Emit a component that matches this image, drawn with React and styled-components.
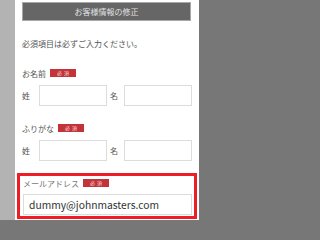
import React from "react";
import styled, { createGlobalStyle } from "styled-components";

const Global = createGlobalStyle`
  html, body { margin: 0; padding: 0; }
  body { font-family: "Noto Sans CJK JP", "Noto Sans", sans-serif; background: #777; }
  * { box-sizing: border-box; }
`;

const Page = styled.div`
  display: flex;
  width: 100%;
  height: 220px;
  overflow: hidden;
  background: #777;
`;

const LeftShade = styled.div`
  width: 15px;
  flex: none;
  background: #b3b3b3;
`;

const RightShade = styled.div`
  flex: 1;
  background: #777;
`;

const Panel = styled.div`
  width: 184px;
  flex: none;
  background: #fff;
  padding: 2px 8px 0 7px;
  display: flex;
  flex-direction: column;
`;

const Header = styled.div`
  height: 19px;
  background: #666;
  border: 1px solid #a8a8a8;
  color: #e2e2e2;
  font-size: 8px;
  display: flex;
  align-items: center;
  justify-content: center;
`;

const Intro = styled.div`
  margin-top: 17px;
  font-size: 8px;
  line-height: 12px;
  color: #555;
`;

const LabelLine = styled.div`
  margin-top: ${(p) => p.$top}px;
  display: flex;
  align-items: center;
  height: 12px;
  font-size: 8px;
  color: ${(p) => p.$color || "#555"};
`;

const Badge = styled.span`
  margin-left: 4px;
  width: 26px;
  height: 8px;
  background: #c3343a;
  color: #f4d6d7;
  font-size: 5px;
  line-height: 8px;
  display: inline-flex;
  align-items: center;
  justify-content: center;
  letter-spacing: 2px;
  padding-left: 2px;
`;

const Row = styled.div`
  margin-top: ${(p) => p.$top ?? 6}px;
  display: flex;
  align-items: center;
  height: 21px;
`;

const SmallLabel = styled.span`
  width: ${(p) => p.$w}px;
  flex: none;
  font-size: 8px;
  color: #555;
  padding-left: ${(p) => p.$pl || 0}px;
`;

const Input = styled.div`
  width: ${(p) => p.$w}px;
  height: 21px;
  flex: none;
  border: 1px solid #dcdcdc;
  background: #fff;
  display: flex;
  align-items: center;
  padding-left: 5px;
  font-family: "Noto Sans CJK JP", "Noto Sans", sans-serif;
  font-size: 10.3px;
  color: #333;
`;

const Highlight = styled.div`
  margin: 12px 0 0 -5px;
  width: 180px;
  border: 3px solid #ee1c24;
  padding: 1px 2px 1px 3px;
`;

export default function App() {
  return (
    <>
      <Global />
      <Page>
        <LeftShade />
        <Panel>
          <Header>お客様情報の修正</Header>
          <Intro>必須項目は必ずご入力ください。</Intro>

          <LabelLine $top={17}>
            お名前<Badge>必須</Badge>
          </LabelLine>
          <Row>
            <SmallLabel $w={17}>姓</SmallLabel>
            <Input $w={68} />
            <SmallLabel $w={17} $pl={3}>名</SmallLabel>
            <Input $w={68} />
          </Row>

          <LabelLine $top={16}>
            ふりがな<Badge>必須</Badge>
          </LabelLine>
          <Row>
            <SmallLabel $w={17}>姓</SmallLabel>
            <Input $w={68} />
            <SmallLabel $w={17} $pl={3}>名</SmallLabel>
            <Input $w={68} />
          </Row>

          <Highlight>
            <LabelLine $top={0} $color="#777">
              メールアドレス<Badge>必須</Badge>
            </LabelLine>
            <Row $top={5}>
              <Input $w={169}>dummy@johnmasters.com</Input>
            </Row>
          </Highlight>
        </Panel>
        <RightShade />
      </Page>
    </>
  );
}
